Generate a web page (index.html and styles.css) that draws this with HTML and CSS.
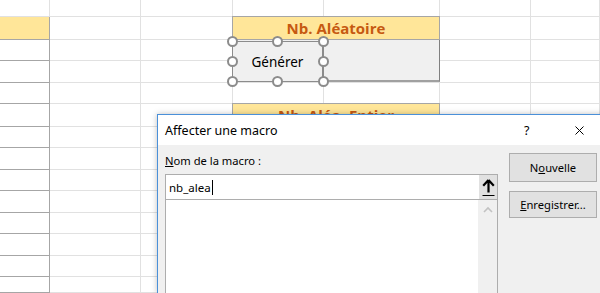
FILE: index.html
```html
<!DOCTYPE html>
<html lang="fr">
<head>
    <meta charset="UTF-8">
    <title>Affecter une macro</title>
    <link rel="stylesheet" href="styles.css">
</head>
<body>
    <div id="sheet" class="sheet">
        <div class="cell-yellow side"></div>
        <div class="cell-yellow head-one">Nb. Aléatoire</div>
        <div class="result-box"></div>
        <div class="cell-yellow head-two">Nb. Aléa. Entier</div>

        <!-- Form button, selected -->
        <div class="form-button">
            <span>Générer</span>
            <i class="handle h-tl"></i><i class="handle h-tc"></i><i class="handle h-tr"></i>
            <i class="handle h-ml"></i><i class="handle h-mr"></i>
            <i class="handle h-bl"></i><i class="handle h-bc"></i><i class="handle h-br"></i>
        </div>
    </div>

    <!-- Dialog -->
    <div class="dialog">
        <div class="dialog-title">
            <span class="title-text">Affecter une macro</span>
            <span class="title-help">?</span>
            <span class="title-close">
                <svg width="9" height="9" viewBox="0 0 9 9">
                    <path d="M0.5 0.5 L8.5 8.5 M8.5 0.5 L0.5 8.5" stroke="#000" stroke-width="1" fill="none"/>
                </svg>
            </span>
        </div>
        <div class="dialog-body">
            <div class="macro-col">
                <label class="macro-label"><u>N</u>om de la macro :</label>
                <div class="macro-input">
                    <span class="macro-value">nb_alea</span><span class="caret"></span>
                    <div class="collapse-btn">
                        <svg width="13" height="19" viewBox="0 0 13 19">
                            <path d="M6.5 2 L1.2 7.8 M6.5 2 L11.8 7.8 M6.5 2 L6.5 14.5" stroke="#000" stroke-width="2.2" fill="none"/>
                            <path d="M0.5 17.5 H12.5" stroke="#000" stroke-width="1"/>
                        </svg>
                    </div>
                </div>
                <div class="macro-list">
                    <div class="scrollbar">
                        <svg width="10" height="7" viewBox="0 0 10 7">
                            <path d="M1 6 L5 2 L9 6" stroke="#c2c2c2" stroke-width="1.6" fill="none"/>
                        </svg>
                    </div>
                </div>
            </div>
            <div class="button-col">
                <button class="dlg-btn btn-new">N<u>o</u>uvelle</button>
                <button class="dlg-btn btn-save"><u>E</u>nregistrer...</button>
            </div>
        </div>
    </div>

    <script>
        // Grid of the worksheet: column widths and row heights in pixels
        var cols = [50, 91, 92, 91, 116, 91, 69];
        var rows = [17, 23, 21, 22, 21, 23, 21, 22, 21, 22, 21, 22, 21, 16];
        var sheet = document.getElementById('sheet');
        sheet.style.gridTemplateColumns = cols.map(function (c) { return c + 'px'; }).join(' ');
        sheet.style.gridTemplateRows = rows.map(function (r) { return r + 'px'; }).join(' ');

        var html = '';
        for (var r = 0; r < rows.length; r++) {
            for (var c = 0; c < cols.length; c++) {
                var cls = 'cell';
                if (c === 0 && r > 0) cls += ' cell-framed';
                html += '<div class="' + cls + '" style="grid-row: ' + (r + 1) + '; grid-column: ' + (c + 1) + ';"></div>';
            }
        }
        sheet.insertAdjacentHTML('afterbegin', html);
    </script>
</body>
</html>
```

FILE: styles.css
```css
body {
    margin: 0;
    width: 600px;
    height: 293px;
    overflow: hidden;
    background-color: #fff;
    position: relative;
    font-family: "Noto Sans", "Open Sans", sans-serif;
}

/* Worksheet */
.sheet {
    display: grid;
    width: 600px;
}

.cell {
    box-sizing: border-box;
    border-right: 1px solid #e1e1e1;
    border-bottom: 1px solid #e1e1e1;
}

.cell-framed {
    border-right-color: #a6a6a6;
    border-bottom-color: #a6a6a6;
}

.cell-yellow {
    box-sizing: border-box;
    background-color: #ffe699;
    border-right: 1px solid #a6a6a6;
    border-bottom: 1px solid #a6a6a6;
    color: #c65911;
    font-family: "Open Sans", sans-serif;
    font-weight: bold;
    font-size: 15px;
    display: flex;
    align-items: center;
    justify-content: center;
    z-index: 1;
}

.side {
    grid-row: 2;
    grid-column: 1;
}

.head-one {
    grid-row: 2;
    grid-column: 4 / 6;
    margin-left: -1px;
    margin-top: -1px;
    border-top: 1px solid #a6a6a6;
    border-left: 1px solid #a6a6a6;
}

.head-two {
    grid-row: 6;
    grid-column: 4 / 6;
    margin-left: -1px;
    margin-top: -1px;
    border-top: 1px solid #a6a6a6;
    border-left: 1px solid #a6a6a6;
}

.result-box {
    grid-row: 3 / 5;
    grid-column: 4 / 6;
    margin-left: -1px;
    box-sizing: border-box;
    background-color: #f0f0f0;
    border-left: 1px solid #a6a6a6;
    border-right: 1px solid #808080;
    border-bottom: 2px solid #a0a0a0;
    margin-bottom: 1px;
    z-index: 1;
}

/* Form button with selection handles */
.form-button {
    grid-row: 3 / 5;
    grid-column: 4;
    margin-left: -1px;
    margin-top: 1px;
    margin-bottom: 1px;
    box-sizing: border-box;
    position: relative;
    background-color: #f0f0f0;
    border: 1px solid #8c8c8c;
    border-width: 1px 2px 1px 1px;
    display: flex;
    align-items: center;
    justify-content: center;
    font-size: 13.5px;
    color: #000;
    z-index: 2;
}

.handle {
    position: absolute;
    width: 7px;
    height: 7px;
    border: 2px solid #8c8c8c;
    border-radius: 50%;
    background-color: #fff;
}

.h-tl, .h-tc, .h-tr { top: -6px; }
.h-ml, .h-mr { top: 14px; }
.h-bl, .h-bc, .h-br { bottom: -6px; }
.h-tl, .h-ml, .h-bl { left: -6px; }
.h-tc, .h-bc { left: 39px; }
.h-tr, .h-mr, .h-br { right: -7px; }

/* Dialog window */
.dialog {
    position: absolute;
    left: 157px;
    top: 114px;
    width: 460px;
    height: 178px;
    border: 1px solid #4a90d9;
    border-bottom: none;
    background-color: #f0f0f0;
    box-shadow: 0 0 6px rgba(0, 0, 0, 0.25);
    font-size: 12px;
    color: #000;
    overflow: hidden;
    z-index: 5;
}

.dialog-title {
    height: 30px;
    background-color: #fff;
    display: flex;
    align-items: center;
    padding-left: 7px;
}

.title-text {
    flex: 1;
    font-size: 12.5px;
}

.title-help {
    width: 8px;
    margin-right: 43px;
    font-size: 12.5px;
}

.title-close {
    width: 9px;
    height: 9px;
    margin-right: 34px;
    display: flex;
}

.dialog-body {
    display: flex;
    gap: 11px;
    padding: 8px 0 0 7px;
}

.macro-col {
    width: 333px;
}

.macro-label {
    display: block;
    height: 21px;
    font-size: 11.2px;
}

.macro-input {
    box-sizing: border-box;
    height: 26px;
    background-color: #fff;
    border: 1px solid #adadad;
    display: flex;
    align-items: center;
    padding-left: 3px;
    font-size: 11.5px;
}

.caret {
    width: 1px;
    height: 15px;
    margin-left: 1px;
    background-color: #000;
}

.collapse-btn {
    margin-left: auto;
    width: 18px;
    height: 24px;
    background-color: #e1e1e1;
    display: flex;
    align-items: center;
    justify-content: center;
}

.macro-list {
    box-sizing: border-box;
    height: 120px;
    background-color: #fff;
    border: 1px solid #adadad;
    border-top: none;
    display: flex;
    justify-content: flex-end;
}

.scrollbar {
    width: 19px;
    background-color: #f0f0f0;
    display: flex;
    justify-content: center;
    padding-top: 6px;
    box-sizing: border-box;
}

.button-col {
    display: flex;
    flex-direction: column;
    gap: 9px;
}

.dlg-btn {
    width: 88px;
    height: 29px;
    background-color: #e1e1e1;
    border: 1px solid #adadad;
    font-family: "Noto Sans", "Open Sans", sans-serif;
    font-size: 11.2px;
    color: #000;
    padding: 0;
}

.btn-save {
    height: 27px;
}
```
